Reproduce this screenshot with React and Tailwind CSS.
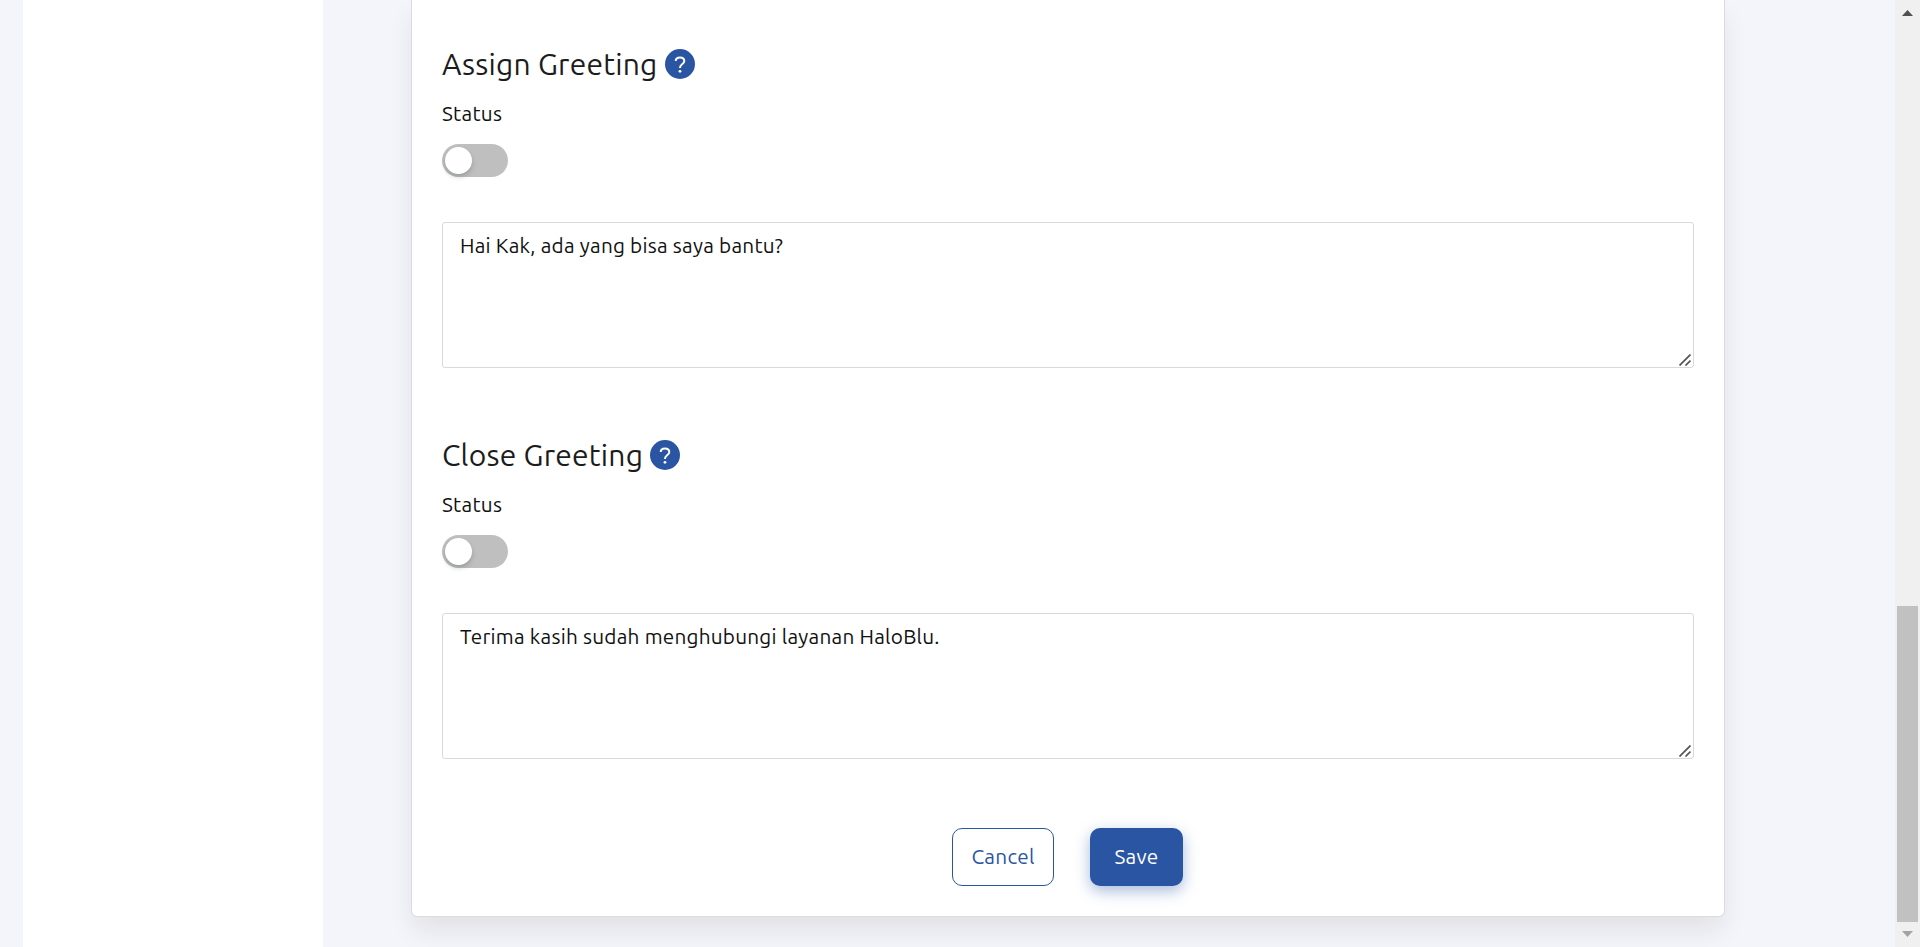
const sections = [
  {
    title: 'Assign Greeting',
    titleClass: 'w-[216px]',
    message: 'Hai Kak, ada yang bisa saya bantu?',
  },
  {
    title: 'Close Greeting',
    titleClass: 'w-[201px]',
    message: 'Terima kasih sudah menghubungi layanan HaloBlu.',
  },
];

function HelpIcon() {
  return (
    <svg className="size-[30px] shrink-0" viewBox="0 0 30 30" fill="none">
      <circle cx="15" cy="15" r="15" fill="#2955a3" />
      <path
        d="M10.7 12C10.7 9.9 12.5 8.4 15 8.4s4.3 1.4 4.3 3.5c0 1.6-.9 2.4-2.2 3.3-1.5 1-2.1 1.8-2.1 3.7"
        stroke="#fff"
        strokeWidth="2"
      />
      <circle cx="15" cy="22.3" r="1.4" fill="#fff" />
    </svg>
  );
}

function Toggle() {
  return (
    <button
      role="switch"
      aria-checked="false"
      className="flex h-[33px] w-[66px] items-center rounded-full bg-[#bfbfbf] pl-[3px]"
    >
      <span className="size-[27px] rounded-full bg-white shadow-[0_3px_5px_rgba(0,35,11,0.2)]" />
    </button>
  );
}

function GreetingSection({ title, titleClass, message }) {
  return (
    <section className="flex h-[391px] flex-col items-start">
      <div className="flex h-[30px] items-center gap-[7px]">
        <h2 className={`text-[30px] leading-[38px] tracking-[0.22px] whitespace-nowrap ${titleClass}`}>{title}</h2>
        <HelpIcon />
      </div>
      <p className="mt-[20px] h-[30px] text-[20.75px] leading-[30px] tracking-[0.25px] text-[#111]">Status</p>
      <div className="mt-[15px]">
        <Toggle />
      </div>
      <div className="relative mt-[45px] h-[146px] w-full">
        <textarea
          readOnly
          defaultValue={message}
          className="block size-full resize-none overflow-hidden rounded-[3px] border border-[#d9d9d9] bg-white px-[17px] py-[8px] text-[20.75px] leading-[30px] tracking-[0.23px] text-[#111] outline-none"
        />
        <svg className="absolute right-[3px] bottom-[2px] size-[12px]" viewBox="0 0 12 12" stroke="#555" strokeWidth="1.7">
          <path d="M.5 11.5 11.5.5M6.5 11.5l5-5" />
        </svg>
      </div>
    </section>
  );
}

export default function App() {
  return (
    <div className="flex h-[947px] w-full overflow-hidden bg-[#f4f5fa] font-['Ubuntu','Noto_Sans',sans-serif] text-[#1c1c1c]">
      <aside className="ml-[23px] w-[300px] shrink-0 bg-white" />
      <main className="min-w-0 flex-1 pl-[88px]">
        <div className="h-[917px] w-[1314px] rounded-b-[6px] border border-t-0 border-[#dcdcdc] bg-white px-[30px] pt-[49px] shadow-[0_15px_27px_-2px_rgba(20,0,0,0.085)]">
          {sections.map((s) => (
            <GreetingSection key={s.title} {...s} />
          ))}
          <div className="-mt-[3px] flex h-[58px] justify-center gap-[36px] pr-[2px] text-[20.75px] tracking-[0.25px]">
            <button className="w-[102px] rounded-[10px] border border-[#2955a3] pl-[1px] text-[#2955a3]">Cancel</button>
            <button className="w-[93px] rounded-[10px] bg-[#2955a3] pl-[1px] text-white shadow-[0_5px_15px_rgba(41,85,163,0.4)]">Save</button>
          </div>
        </div>
      </main>
      <div className="flex w-[25px] shrink-0 flex-col items-center justify-between bg-[#f0f0f0]">
        <svg className="mt-[10px] h-[6px] w-[11px]" viewBox="0 0 11 6" fill="#505050">
          <path d="M5.5 0 11 6H0z" />
        </svg>
        <div className="flex flex-col items-center">
          <div className="h-[316px] w-[21px] bg-[#c1c1c1]" />
          <svg className="mt-[9px] mb-[10px] h-[6px] w-[11px]" viewBox="0 0 11 6" fill="#a3a3a3">
            <path d="M0 0h11L5.5 6z" />
          </svg>
        </div>
      </div>
    </div>
  );
}
